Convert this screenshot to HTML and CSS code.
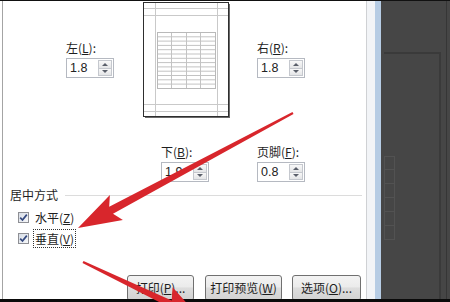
FILE: index.html
```html
<!DOCTYPE html>
<html lang="zh-CN">
<head>
  <meta charset="UTF-8" />
  <title>页面设置 - 页边距</title>
  <link rel="stylesheet" href="styles.css">
</head>
<body>
  <div class="screen">
    <div class="dialog">
      <div class="margins-top">
        <div class="field">
          <label>左(<u>L</u>):</label>
          <div class="spin"><span class="val">1.8</span><span class="btns"><i class="up"></i><i class="down"></i></span></div>
        </div>
        <svg class="preview" width="88" height="117" viewBox="0 0 88 117">
          <rect x="0.5" y="0.5" width="85" height="114" fill="#fff" stroke="#2e2e2e" />
          <path d="M86.5 2 V116 M2 115.5 H87" stroke="#6a6a6a" fill="none" />
          <path d="M12.5 1 V114 M74.5 1 V114 M1 6.5 H85 M1 13.5 H85 M1 102.5 H85 M1 109.5 H85" stroke="#c9c9c9" fill="none" />
          <rect x="14.5" y="30.5" width="58" height="56" fill="none" stroke="#b9b9b9" />
          <path d="M28.5 31 V86 M43.5 31 V86 M57.5 31 V86 M15 34.8 H72 M15 39.1 H72 M15 43.4 H72 M15 47.7 H72 M15 52 H72 M15 56.3 H72 M15 60.6 H72 M15 64.9 H72 M15 69.2 H72 M15 73.5 H72 M15 77.8 H72 M15 82.1 H72" stroke="#c3c3c3" fill="none" />
        </svg>
        <div class="field">
          <label>右(<u>R</u>):</label>
          <div class="spin"><span class="val">1.8</span><span class="btns"><i class="up"></i><i class="down"></i></span></div>
        </div>
      </div>

      <div class="margins-bottom">
        <div class="field">
          <label>下(<u>B</u>):</label>
          <div class="spin"><span class="val">1.9</span><span class="btns"><i class="up"></i><i class="down"></i></span></div>
        </div>
        <div class="field">
          <label>页脚(<u>F</u>):</label>
          <div class="spin"><span class="val">0.8</span><span class="btns"><i class="up"></i><i class="down"></i></span></div>
        </div>
      </div>

      <div class="group-title"><span>居中方式</span><span class="rule"></span></div>

      <div class="checks">
        <div class="check">
          <span class="box"><svg width="9" height="9" viewBox="0 0 9 9"><path d="M1.2 4.6 L3.5 7 L7.8 1.6" stroke="#34487e" stroke-width="1.7" fill="none" /></svg></span>
          <span class="text">水平(<u>Z</u>)</span>
        </div>
        <div class="check">
          <span class="box"><svg width="9" height="9" viewBox="0 0 9 9"><path d="M1.2 4.6 L3.5 7 L7.8 1.6" stroke="#34487e" stroke-width="1.7" fill="none" /></svg></span>
          <span class="text focus">垂直(<u>V</u>)</span>
        </div>
      </div>

      <div class="buttons">
        <button class="btn btn-print">打印(<u>P</u>)...</button>
        <button class="btn btn-preview">打印预览(<u>W</u>)</button>
        <button class="btn btn-options">选项(<u>O</u>)...</button>
      </div>
    </div>

    <div class="edge"></div>

    <div class="backdrop">
      <div class="sheet">
        <div class="ghost"><span></span><span></span><span></span><span></span><span></span><span></span></div>
      </div>
      <div class="rim"></div>
    </div>
  </div>

  <!-- flechas rojas de la captura -->
  <svg class="arrows" width="450" height="302" viewBox="0 0 450 302">
    <polygon points="292.5,112.1 109.2,206.8 109.9,195.1 78,228 122.9,219.9 113,213.8 293.5,113.9" fill="#d8262c" />
    <polygon points="83.5,260.9 171.7,300.5 172.6,287.2 200,318 158.8,316 168.7,306.9 82.5,263.1" fill="#d8262c" />
  </svg>
</body>
</html>
```

FILE: styles.css
```css
* { margin: 0; padding: 0; box-sizing: border-box; }
body {
  position: relative;
  width: 450px;
  height: 302px;
  overflow: hidden;
  font-family: 'Noto Sans CJK SC', 'Noto Sans', sans-serif;
  font-size: 12px;
  color: #1e1e1e;
  background: #000;
}
u {
  text-decoration-thickness: 1px;
  text-underline-offset: 1px;
}
.screen {
  display: flex;
  height: 302px;
  border-top: 1px solid #111;
  border-bottom: 3px solid #0a0a0a;
  background: #fff;
}
.dialog {
  width: 364px;
  margin-left: 2px;
  border-left: 1px solid #a4a4a4;
  background: #fff;
  display: flex;
  flex-direction: column;
  overflow: hidden;
}

/* margenes */
.margins-top {
  display: grid;
  grid-template-columns: 77px 114px auto;
  align-items: start;
  height: 118px;
  padding-left: 63px;
}
.margins-top .field { margin-top: 39px; }
.preview {
  display: block;
  margin-top: 1px;
}
.margins-bottom {
  display: grid;
  grid-template-columns: 96px auto;
  margin-top: 25px;
  padding-left: 158px;
}
.field label {
  display: block;
  height: 16px;
  line-height: 16px;
  white-space: nowrap;
}
.spin {
  display: flex;
  width: 48px;
  height: 20px;
  margin-top: 2px;
  border: 1px solid #b5b9c1;
  background: #fff;
}
.spin .val {
  flex: 1;
  padding-left: 3px;
  line-height: 18px;
  font-family: 'Liberation Sans', 'Noto Sans', sans-serif;
  font-size: 12.5px;
  color: #222;
}
.btns {
  width: 15px;
  display: flex;
  flex-direction: column;
  padding: 1px 1px 1px 0;
}
.btns i {
  flex: 1;
  display: flex;
  align-items: center;
  justify-content: center;
  border: 1px solid #c5c8ce;
  background: linear-gradient(#f8f8f8, #e4e5e7);
}
.btns i + i { border-top: none; }
.btns i::before {
  content: '';
  border-left: 3px solid transparent;
  border-right: 3px solid transparent;
}
.btns .up::before { border-bottom: 3px solid #5a5f6a; }
.btns .down::before { border-top: 3px solid #5a5f6a; }

/* centrado */
.group-title {
  display: flex;
  align-items: center;
  height: 16px;
  margin-top: 5px;
  padding: 0 4px 0 7px;
  line-height: 16px;
}
.group-title .rule {
  flex: 1;
  height: 1px;
  margin-left: 7px;
  background: #dcdcdc;
}
.checks {
  display: flex;
  flex-direction: column;
  margin-top: 4px;
  padding-left: 15px;
}
.check {
  display: flex;
  align-items: center;
  height: 21px;
}
.check .box {
  display: flex;
  align-items: center;
  justify-content: center;
  width: 11px;
  height: 11px;
  border: 1px solid #8e8f94;
  background: linear-gradient(135deg, #d7dde6, #f7f8fa);
}
.check .text {
  margin-left: 4px;
  padding: 0 1px;
  line-height: 17px;
  border: 1px solid transparent;
}
.check .focus { border: 1px dotted #333; }

/* botones */
.buttons {
  display: flex;
  gap: 11px;
  margin-top: 26px;
  padding-left: 124px;
}
.btn {
  height: 26px;
  border: 1px solid #707070;
  border-radius: 3px;
  background: linear-gradient(#f3f3f3 0%, #ebebeb 45%, #dddddd 50%, #d2d2d2 100%);
  font-family: inherit;
  font-size: 12px;
  color: #1e1e1e;
  line-height: 22px;
}
.btn-print { width: 67px; }
.btn-preview { width: 77px; margin-right: -1px; }
.btn-options { width: 69px; }

/* fondo de la derecha */
.edge {
  width: 15px;
  border-left: 1px solid #cfd1d4;
  background: linear-gradient(to right, #f2f4f7 0 8px, #b6cce4 8px);
}
.backdrop {
  flex: 1;
  display: flex;
  padding-top: 51px;
  padding-left: 3px;
  background: #464646;
}
.sheet {
  width: 57px;
  border-top: 2px solid #3a3a3a;
  border-right: 2px solid #3a3a3a;
  padding-top: 102px;
}
.ghost {
  display: flex;
  flex-direction: column;
  width: 11px;
}
.ghost span {
  height: 14px;
  border: 1px solid #525252;
  border-top: none;
}
.ghost span:first-child { border-top: 1px solid #525252; }
.rim {
  width: 1px;
  margin-left: 5px;
  margin-top: -51px;
  background: #363636;
}
.arrows {
  position: absolute;
  top: 0;
  left: 0;
  pointer-events: none;
}
```
